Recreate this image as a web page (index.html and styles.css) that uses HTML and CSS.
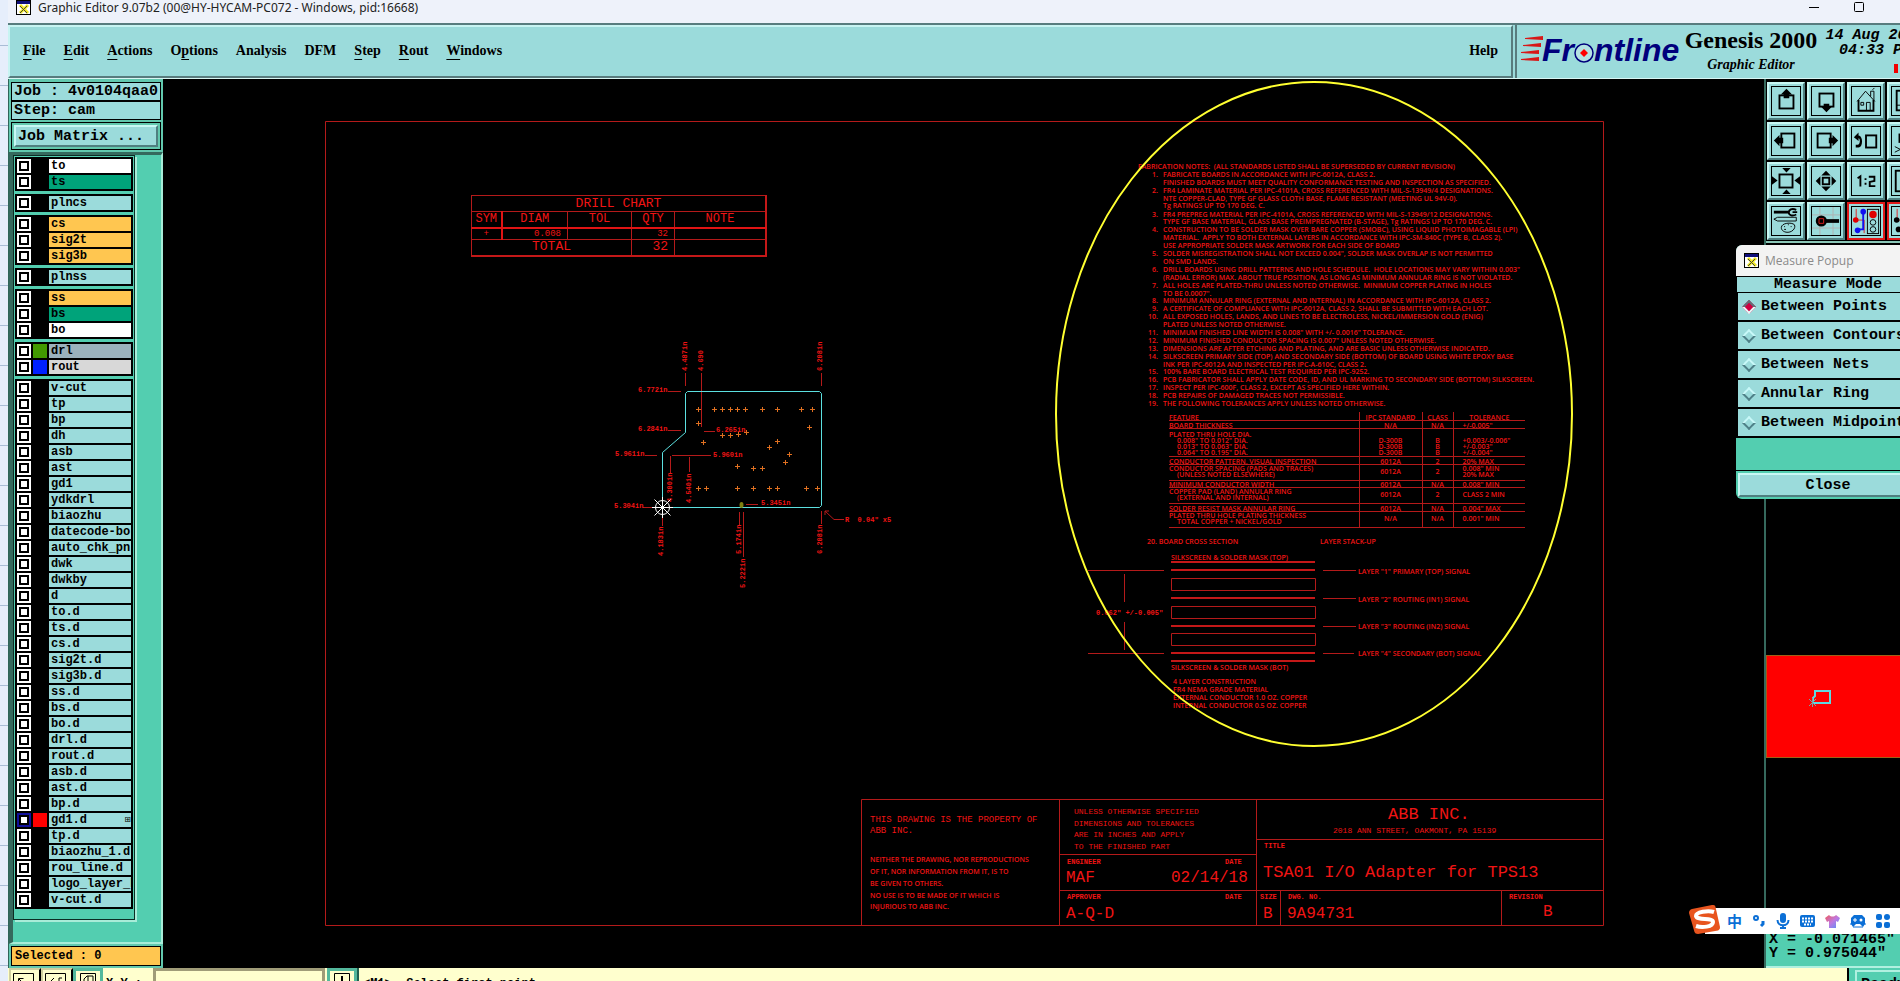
FILE: index.html
```html
<!DOCTYPE html>
<html lang="en">
<head>
    <meta charset="UTF-8">
    <meta name="viewport" content="width=device-width, initial-scale=1.0">
    <title>Graphic Editor</title>
    <link rel="stylesheet" href="styles.css">
</head>
<body>
    <div class="app">
        <header class="titlebar">
            <svg class="app-icon" width="15" height="15" viewBox="0 0 15 15"><rect x="0.5" y="0.5" width="14" height="14" fill="#fff" stroke="#000"/><rect x="1" y="1" width="13" height="3" fill="#10107a"/><path d="M4 5l8 8M12 5l-8 8" stroke="#f0e820" stroke-width="3"/><path d="M4 6l7 7M11 6l-7 7" stroke="#444"/></svg>
            <span class="title">Graphic Editor 9.07b2 (00@HY-HYCAM-PC072 - Windows, pid:16668)</span>
            <div class="window-buttons">
                <button type="button" aria-label="Minimize"><svg width="10" height="10"><path d="M0 5.5h10" stroke="#000"/></svg></button>
                <button type="button" aria-label="Maximize"><svg width="10" height="10"><rect x="0.5" y="0.5" width="9" height="9" rx="1" fill="none" stroke="#000"/></svg></button>
                <button type="button" aria-label="Close"></button>
            </div>
        </header>

        <div class="topbar">
            <nav class="menu">
                <button type="button"><u>F</u>ile</button>
                <button type="button"><u>E</u>dit</button>
                <button type="button"><u>A</u>ctions</button>
                <button type="button">O<u>p</u>tions</button>
                <button type="button">Analysis</button>
                <button type="button">DFM</button>
                <button type="button"><u>S</u>tep</button>
                <button type="button"><u>R</u>out</button>
                <button type="button"><u>W</u>indows</button>
                <button type="button" class="help">Help</button>
            </nav>
            <div class="brand">
                <svg class="logo" width="162" height="34" viewBox="0 0 162 34">
                    <g fill="#d81818"><path d="M4 5L22 3V7L4 6zM2 12L20 10V14L2 13zM0 19L18 17V21L0 20zM0 26L18 24V28L0 27z"/></g>
                    <text class="logo-text" x="21" y="28">Fr</text>
                    <text class="logo-text" x="73" y="28">ntline</text>
                    <circle cx="63" cy="20" r="9" fill="#b4e2e2" stroke="#00007c" stroke-width="1.5"/>
                    <path d="M63 16l4 4-4 4-4-4z" fill="#f00"/>
                </svg>
                <div class="product">
                    <div class="product-name">Genesis 2000</div>
                    <div class="product-sub">Graphic Editor</div>
                </div>
                <div class="clock">
                    <div>14 Aug 2018</div>
                    <div>04:33 PM</div>
                    <span class="clock-mark"></span>
                </div>
            </div>
        </div>

        <div class="main">
            <aside class="left">
                <div class="job-box">
                    <div>Job : 4v0104qaa0</div>
                    <div>Step: cam</div>
                </div>
                <div class="matrix-box"><button type="button">Job Matrix ...</button></div>
                <div class="layers-well">
                    <div class="layers" id="layers"></div>
                </div>
                <div class="selected-box"><div>Selected : 0</div></div>
            </aside>

            <section class="canvas">
                <svg class="drawing" width="1602" height="889" viewBox="163 79 1602 889">
                    <!-- sheet border and title block -->
                    <path class="line" d="M325.5 121.5H1603.5V925.5H325.5zM861.5 925V799.5H1603M1059.5 799V925M1256.5 799V925M1059 854.5H1256M1256 839.5H1603M1059 890.5H1603M1280.5 890V925M1501.5 890V925"/>
                    <g class="t9">
                        <text x="870" y="822">THIS DRAWING IS THE PROPERTY OF</text>
                        <text x="870" y="833">ABB INC.</text>
                    </g>
                    <g class="t8">
                        <text x="1074" y="814">UNLESS OTHERWISE SPECIFIED</text>
                        <text x="1074" y="826">DIMENSIONS AND TOLERANCES</text>
                        <text x="1074" y="837">ARE IN INCHES AND APPLY</text>
                        <text x="1074" y="849">TO THE FINISHED PART</text>
                        <text x="1333" y="833">2018 ANN STREET, OAKMONT, PA 15139</text>
                    </g>
                    <g class="t7">
                        <text class="note" x="870" y="862">NEITHER THE DRAWING, NOR REPRODUCTIONS</text>
                        <text class="note" x="870" y="874">OF IT, NOR INFORMATION FROM IT, IS TO</text>
                        <text class="note" x="870" y="886">BE GIVEN TO OTHERS.</text>
                        <text class="note" x="870" y="898">NO USE IS TO BE MADE OF IT WHICH IS</text>
                        <text class="note" x="870" y="909">INJURIOUS TO ABB INC.</text>
                        <text x="1067" y="864">ENGINEER</text>
                        <text x="1225" y="864">DATE</text>
                        <text x="1067" y="899">APPROVER</text>
                        <text x="1225" y="899">DATE</text>
                        <text x="1264" y="848">TITLE</text>
                        <text x="1260" y="899">SIZE</text>
                        <text x="1288" y="899">DWG. NO.</text>
                        <text x="1509" y="899">REVISION</text>
                    </g>
                    <g class="t16">
                        <text x="1066" y="882">MAF</text>
                        <text x="1171" y="882">02/14/18</text>
                        <text x="1066" y="918">A-Q-D</text>
                        <text x="1263" y="918">B</text>
                        <text x="1287" y="918">9A94731</text>
                        <text x="1543" y="916">B</text>
                    </g>
                    <g class="t17">
                        <text x="1388" y="819">ABB INC.</text>
                        <text x="1263" y="877">TSA01 I/O Adapter for TPS13</text>
                    </g>

                    <!-- board outline with dimensions -->
                    <path class="line" d="M685.5 373V386M701.5 373V427M821.5 373V386M668 391.5H681M668 430.5H681M645 455.5H657M643 507.5H652M704 431.5H715M672 455.5H711M670.5 456V473M689.5 457V472M662.5 517V526M739.5 512V525M743.5 512V557M746 504.5H758M821.5 511V524M825 511L834 519.5H844M825 515V511H829"/>
                    <g class="t7">
                        <text x="638" y="392">6.772in</text>
                        <text x="638" y="431">6.284in</text>
                        <text x="615" y="456">5.961in</text>
                        <text x="614" y="508">5.304in</text>
                        <text x="716" y="432">6.265in</text>
                        <text x="713" y="457">5.960in</text>
                        <text x="761" y="505">5.345in</text>
                        <text x="845" y="522">R  0.04" x5</text>
                        <text transform="translate(687 371) rotate(-90)">4.487in</text>
                        <text transform="translate(703 371) rotate(-90)">4.690</text>
                        <text transform="translate(822 371) rotate(-90)">6.208in</text>
                        <text transform="translate(672 502) rotate(-90)">4.300in</text>
                        <text transform="translate(691 503) rotate(-90)">4.540in</text>
                        <text transform="translate(663 556) rotate(-90)">4.183in</text>
                        <text transform="translate(741 554) rotate(-90)">5.174in</text>
                        <text transform="translate(745 588) rotate(-90)">5.222in</text>
                        <text transform="translate(822 554) rotate(-90)">6.208in</text>
                    </g>
                    <path class="outline" d="M687.5 391.5H819.5L821.5 393.5V505.5L819.5 507.5H662.5V452.5L685.5 432.5V393.5z"/>
                    <g id="drills"></g>
                    <ellipse cx="741.5" cy="505" rx="2" ry="3" fill="#808010"/>
                    <g class="origin"><circle cx="662.5" cy="507.5" r="7"/><path d="M652 507.5H673M662.5 497V518M654.5 499.5l16 16M670.5 499.5l-16 16"/></g>

                    <!-- fabrication notes -->
                    <g class="t7 note" id="notes"></g>

                    <!-- layer stack-up -->
                    <g class="t7 note">
                        <text x="1147" y="544">20. BOARD CROSS SECTION</text>
                        <text x="1320" y="544">LAYER STACK-UP</text>
                        <text x="1171" y="560">SILKSCREEN &amp; SOLDER MASK (TOP)</text>
                        <text x="1171" y="670">SILKSCREEN &amp; SOLDER MASK (BOT)</text>
                        <text x="1173" y="684">4 LAYER CONSTRUCTION</text>
                        <text x="1173" y="692">FR4 NEMA GRADE MATERIAL</text>
                        <text x="1173" y="700">EXTERNAL CONDUCTOR 1.0 OZ. COPPER</text>
                        <text x="1173" y="708">INTERNAL CONDUCTOR 0.5 OZ. COPPER</text>
                        <text x="1358" y="574">LAYER "1" PRIMARY (TOP) SIGNAL</text>
                        <text x="1358" y="602">LAYER "2" ROUTING (IN1) SIGNAL</text>
                        <text x="1358" y="629">LAYER "3" ROUTING (IN2) SIGNAL</text>
                        <text x="1358" y="656">LAYER "4" SECONDARY (BOT) SIGNAL</text>
                    </g>
                    <g class="t7">
                        <text x="1096" y="615">0.062" +/-0.005"</text>
                    </g>
                    <path class="line" d="M1171.5 578.5H1315.5V590.5H1171.5zM1171.5 606.5H1315.5V618.5H1171.5zM1171.5 633.5H1315.5V645.5H1171.5zM1088 570.5H1164M1088 653.5H1164M1124.5 574V602M1124.5 622V650M1323 570.5H1356M1323 598.5H1356M1323 626.5H1356M1323 653.5H1354"/>
                    <path class="line thick" d="M1171 562H1315M1171 570H1315M1171 598H1315M1171 626H1315M1171 653H1315M1171 661H1315"/>
                    <ellipse class="marker" cx="1314" cy="414" rx="258" ry="332"/>
                </svg>

                <table class="drill-chart">
                    <colgroup><col class="sym"><col class="diam"><col class="tol"><col class="qty"><col></colgroup>
                    <tr><th colspan="5">DRILL CHART</th></tr>
                    <tr class="heads"><th>SYM</th><th>DIAM</th><th>TOL</th><th>QTY</th><th>NOTE</th></tr>
                    <tr class="values"><td>+</td><td class="num">0.008</td><td></td><td class="num">32</td><td></td></tr>
                    <tr><td colspan="3">TOTAL</td><td class="num">32</td><td></td></tr>
                </table>

                <table class="tolerances">
                    <tr class="h8"><th class="feature">FEATURE</th><th class="std">IPC STANDARD</th><th class="class">CLASS</th><th>TOLERANCE</th></tr>
                    <tr class="h8"><td>BOARD THICKNESS</td><td>N/A</td><td>N/A</td><td>+/-0.005"</td></tr>
                    <tr class="h28"><td>PLATED THRU HOLE DIA.<br><span>0.008" TO 0.012" DIA.<br>0.013" TO 0.063" DIA.<br>0.064" TO 0.195" DIA.</span></td><td>D-300B<br>D-300B<br>D-300B</td><td>B<br>B<br>B</td><td>+0.003/-0.006"<br>+/-0.003"<br>+/-0.004"</td></tr>
                    <tr class="h8"><td>CONDUCTOR PATTERN, VISUAL INSPECTION</td><td>6012A</td><td>2</td><td>20% MAX</td></tr>
                    <tr class="h16"><td>CONDUCTOR SPACING (PADS AND TRACES)<br><span>(UNLESS NOTED ELSEWHERE)</span></td><td>6012A</td><td>2</td><td>0.008" MIN<br>20% MAX</td></tr>
                    <tr class="h7"><td>MINIMUM CONDUCTOR WIDTH</td><td>6012A</td><td>N/A</td><td>0.008" MIN</td></tr>
                    <tr class="h16"><td>COPPER PAD (LAND) ANNULAR RING<br><span>(EXTERNAL AND INTERNAL)</span></td><td>6012A</td><td>2</td><td>CLASS 2 MIN</td></tr>
                    <tr class="h8"><td>SOLDER RESIST MASK ANNULAR RING</td><td>6012A</td><td>N/A</td><td>0.004" MAX</td></tr>
                    <tr class="h16"><td>PLATED THRU HOLE PLATING THICKNESS<br><span>TOTAL COPPER + NICKEL/GOLD</span></td><td>N/A</td><td>N/A</td><td>0.001" MIN</td></tr>
                </table>
            </section>

            <aside class="right">
                <div class="tools">
                    <button type="button" aria-label="Pan up"><svg viewBox="0 0 30 30"><rect x="8" y="9" width="15" height="14" class="s2"/><path d="M15.5 2l6 6h-3v4h-6V8h-3z"/></svg></button>
                    <button type="button" aria-label="Pan down"><svg viewBox="0 0 30 30"><rect x="8" y="7" width="15" height="14" class="s2"/><path d="M15.5 27l6-6h-3v-3h-6v3h-3z"/></svg></button>
                    <button type="button" aria-label="Home"><svg viewBox="0 0 30 30"><path class="s1" d="M5.5 15.5L14.5 4.5L24.5 15.5M20 10V4.5h3.5V14M22 3l2-2"/><path class="s2" d="M7 14V25.5H23V14"/><path class="s1" d="M9.5 16.5h3v3h-3zM15.5 25V16.5h4V25"/></svg></button>
                    <button type="button" aria-label="Window"><svg viewBox="0 0 30 30"><rect x="5" y="4" width="20" height="21" class="s2"/><path class="s1" d="M5 19.5h20"/></svg></button>
                    <button type="button" aria-label="Pan left"><svg viewBox="0 0 30 30"><rect x="10" y="7" width="14" height="15" class="s2"/><path d="M2 14.5l6-6v3h4v6H8v3z"/></svg></button>
                    <button type="button" aria-label="Pan right"><svg viewBox="0 0 30 30"><rect x="6" y="7" width="14" height="15" class="s2"/><path d="M28 14.5l-6-6v3h-4v6h4v3z"/></svg></button>
                    <button type="button" aria-label="Previous view"><svg viewBox="0 0 30 30"><rect x="15" y="9" width="11" height="13" class="s2"/><path d="M2 11l5-5v3c5 0 5 13 0 13H4v-3h2c3 0 3-7 1-7v3z"/></svg></button>
                    <button type="button" aria-label="Zoom area"><svg viewBox="0 0 30 30"><rect x="8" y="8" width="12" height="8" class="s2"/><path class="s1" d="M3 21l6 3-6 3M14 22h10"/></svg></button>
                    <button type="button" aria-label="Zoom out"><svg viewBox="0 0 30 30"><rect x="8" y="8" width="14" height="14" class="s2"/><path d="M11 1h9l-4.5 5zM11 29h9l-4.5-5zM0 10v9l6-4.5zM30 10v9l-6-4.5z"/></svg></button>
                    <button type="button" aria-label="Zoom in"><svg viewBox="0 0 30 30"><rect x="11.5" y="11.5" width="7" height="7" class="s2"/><path d="M15 4l5 5h-10zM15 26l5-5h-10zM4 15l5-5v10zM26 15l-5-5v10z"/></svg></button>
                    <button type="button" aria-label="Half scale"><svg viewBox="0 0 30 30"><path class="s2" d="M6 12l3-2V21M14.5 12v2M14.5 17v2M18 10.5h6V15l-5 1v4.5h6"/></svg></button>
                    <button type="button" aria-label="Fit"><svg viewBox="0 0 30 30"><rect x="4" y="4" width="22" height="22" class="s2"/></svg></button>
                    <button type="button" aria-label="Edit tools"><svg viewBox="0 0 30 30"><path d="M2 4h16v3H2z"/><path class="s2" d="M26 3c-5-2-8 0-8 3s4 4 8 2M22 5.5h5"/><path class="s1" d="M2 13l4-2h20v4H6z"/><path class="s1" d="M10 22c0-5 11-6 14-3 2 4-3 9-9 8-4-1-5-3-5-5z"/><path class="s1" d="M13 21h1M17 19h1M20 21h1M13 24h2"/></svg></button>
                    <button type="button" aria-label="Snap"><svg viewBox="0 0 30 30"><path d="M0 8.5h30M0 22.5h30M8.5 0v30M22.5 0v30" stroke="#b0b0b0"/><circle cx="10" cy="15" r="6"/><path d="M15 13h14v4H15z"/><path d="M7.5 12.5h5v5h-5z" fill="none" stroke="#e02020"/></svg></button>
                    <button type="button" class="alert" aria-label="Net colors"><svg viewBox="0 0 30 30"><path d="M4.5 2v12M4 14h9v14" fill="none" stroke="#e02020"/><path d="M12 6v18H6" fill="none" stroke="#1010f0" stroke-width="2"/><circle cx="4" cy="14" r="3" fill="#e00000"/><circle cx="12" cy="5" r="3" fill="#1010f0"/><circle cx="6" cy="25" r="3" fill="#1010f0"/><rect class="s1" x="16.5" y="2.5" width="12" height="26"/><circle cx="22.5" cy="8" r="4" fill="#e00000"/><circle class="s1" cx="22.5" cy="16.5" r="3"/><circle class="s1" cx="22.5" cy="24" r="3"/></svg></button>
                    <button type="button" class="alert" aria-label="Nets"><svg viewBox="0 0 30 30"><path d="M5.5 2v12M5 14h9v14" fill="none" stroke="#e02020"/><circle cx="5" cy="14" r="3"/><circle cx="7" cy="24" r="3"/></svg></button>
                </div>
                <div class="overview">
                    <svg width="24" height="20" viewBox="0 0 24 20"><path d="M7 2h15v12H5V9l2-2z" fill="none" stroke="#60d8e0" stroke-width="2"/><path d="M1 10l7 7M8 10l-7 7M4.5 9v9" stroke="#80a0a0" fill="none"/></svg>
                </div>
                <div class="coords">
                    <div>X = -0.071465"</div>
                    <div>Y = 0.975044"</div>
                </div>
            </aside>
        </div>

        <footer class="bottom">
            <button type="button" class="tool" aria-label="Profile"><svg width="22" height="20"><path class="s1" d="M.5 20V.5h20V20M5.5 20V5.5h5M6 6l6 6"/></svg></button>
            <button type="button" class="tool" aria-label="Contour"><svg width="22" height="20"><path class="s1" d="M.5 20V.5h20V20M5 9l4-4M14 9V5h3"/></svg></button>
            <button type="button" class="tool teal" aria-label="Attributes"><svg width="16" height="20"><path class="s1" d="M.5 20V.5h15V20M4 9V6l3-3h6v8M8 3v8"/></svg></button>
            <label for="xy">X Y :</label>
            <input type="text" id="xy">
            <button type="button" class="tool teal" aria-label="Add"><svg width="16" height="20"><path class="s1" d="M.5 20V.5h15V20"/><path class="s2" d="M8 3v10"/></svg></button>
            <div class="status">&lt;M1&gt;- Select first point</div>
            <div class="ready"><div>Ready</div></div>
        </footer>
    </div>

    <div class="popup">
        <div class="popup-title">
            <svg class="app-icon" width="15" height="15" viewBox="0 0 15 15"><rect x="0.5" y="0.5" width="14" height="14" fill="#fff" stroke="#000"/><rect x="1" y="1" width="13" height="3" fill="#10107a"/><path d="M4 5l8 8M12 5l-8 8" stroke="#f0e820" stroke-width="3"/><path d="M4 6l7 7M11 6l-7 7" stroke="#444"/></svg>
            <span>Measure Popup</span>
        </div>
        <div class="popup-head">Measure Mode</div>
        <div class="modes">
            <label><input type="radio" name="mode" checked>Between Points</label>
            <label><input type="radio" name="mode">Between Contours</label>
            <label><input type="radio" name="mode">Between Nets</label>
            <label><input type="radio" name="mode">Annular Ring</label>
            <label><input type="radio" name="mode">Between Midpoints</label>
        </div>
        <div class="popup-foot"><button type="button">Close</button></div>
    </div>

    <div class="ime">
        <svg class="ime-logo" width="32" height="31" viewBox="0 0 32 31"><path d="M3 5L23 1c2 0 3 0 3.500 2L31 23c0 2-1 3-2 3.500L9 30c-2 0-3-1-3.500-2L0 9C0 7 1 5.500 3 5z" fill="#e8541e"/><path d="M25 8C19 6 7 8 7 12c1 5 17 1 17 6 0 5-11 6-17 4" fill="none" stroke="#fff" stroke-width="4"/></svg>
        <span>中</span>
        <svg width="14" height="14" viewBox="0 0 14 14"><circle cx="4" cy="4" r="2" fill="none" stroke="#0b6fd6" stroke-width="2"/><path d="M11 7v3l-2 2" fill="none" stroke="#0b6fd6" stroke-width="3"/></svg>
        <svg width="14" height="16" viewBox="0 0 14 16"><rect x="4" y="0" width="6" height="10" rx="3" fill="#0b6fd6"/><path d="M1.500 7c0 7 11 7 11 0M7 12v3M4 15h6" fill="none" stroke="#0b6fd6" stroke-width="2"/></svg>
        <svg width="15" height="13" viewBox="0 0 15 13"><rect width="15" height="12" rx="2" fill="#0b6fd6"/><path d="M2 3.500h11M2 6.500h11M4 9.500h7" stroke="#fff" stroke-width="2" stroke-dasharray="2 1"/></svg>
        <svg width="15" height="14" viewBox="0 0 15 14"><defs><linearGradient id="shirt" x1="0" y1="0" x2="1" y2="1"><stop offset="0" stop-color="#ee5a5a"/><stop offset="0.500" stop-color="#c078e0"/><stop offset="1" stop-color="#5090f8"/></linearGradient></defs><path d="M4 1c2 2 5 2 7 0l4 3-2 4-2-1v7H4V7L2 8 0 4z" fill="url(#shirt)"/></svg>
        <svg width="16" height="14" viewBox="0 0 16 14"><path d="M4 1h8l3 3v6l-2 3-3-3H6l-3 3-2-3V4z" fill="#0b6fd6"/><path d="M3 6h4M5 4v4" stroke="#fff"/><circle cx="11" cy="6" r="1.500" fill="#fff"/><path d="M0 10h3M13 10h3M3 13h10" stroke="#0b6fd6"/></svg>
        <svg width="14" height="14" viewBox="0 0 14 14"><g fill="#0b6fd6"><rect width="6" height="6" rx="2"/><circle cx="11" cy="3" r="3"/><rect y="8" width="6" height="6" rx="2"/><rect x="8" y="8" width="6" height="6" rx="2"/></g></svg>
        <svg width="14" height="14" viewBox="0 0 14 14"><circle cx="7" cy="7" r="5" fill="none" stroke="#0b6fd6" stroke-width="3" stroke-dasharray="3 1"/></svg>
    </div>

    <script src="script.js"></script>
</body>
</html>
```

FILE: styles.css
```css
* {
    box-sizing: border-box;
}

body {
    margin: 0;
    height: 100vh;
    overflow: hidden;
    position: relative;
    padding-left: 8px;
    background: repeating-linear-gradient(#e6eefb 0 39px, #a9bdd6 39px 40px) 0 6px;
    font-family: "Liberation Mono", monospace;
    color: #000;
}

button {
    font: inherit;
    color: inherit;
    border: none;
    margin: 0;
    padding: 0;
    background: none;
}

svg {
    display: block;
    flex-shrink: 0;
}

.s1,
.s2 {
    fill: none;
    stroke: #000;
}

.s2 {
    stroke-width: 2;
}

.app {
    width: calc(100% + 28px);
    height: 100%;
    display: flex;
    flex-direction: column;
    background: #000;
}

/* title bar */
.titlebar {
    height: 23px;
    display: flex;
    background: #eef2fa;
    padding-left: 8px;
    font: 12px/16px "Noto Sans", sans-serif;
    color: #222;
}

.title {
    margin-left: 7px;
}

.window-buttons {
    margin-left: auto;
    margin-right: 2px;
    display: flex;
}

.window-buttons button {
    width: 45px;
    height: 14px;
    display: flex;
    align-items: center;
    justify-content: center;
}

/* menu and logo */
.topbar {
    height: 56px;
    display: flex;
    background: #9bdbdb;
    border-top: 2px solid #587c7e;
    border-bottom: 1px solid #d8f6f4;
}

.menu {
    flex: 1;
    display: flex;
    align-items: center;
    gap: 18px;
    padding: 0 13px 2px;
    margin-right: 2px;
    border: 2px solid;
    border-color: #c8f4f2 #587c7e #587c7e #c8f4f2;
    font: bold 14px/20px "Liberation Serif", serif;
}

.menu u {
    text-underline-offset: 4px;
}

.help {
    margin-left: auto;
}

.brand {
    width: 413px;
    display: flex;
    border-left: 2px solid #587c7e;
    padding-left: 4px;
}

.logo {
    margin-top: 8px;
}

.logo-text {
    font: italic bold 32px "Liberation Sans", sans-serif;
    fill: #00007c;
}

.product {
    width: 136px;
    text-align: center;
    font-family: "Liberation Serif", serif;
    font-weight: bold;
}

.product-name {
    font-size: 24px;
    line-height: 30px;
}

.product-sub {
    font-size: 14px;
    font-style: italic;
    line-height: 20px;
}

.clock {
    width: 106px;
    margin-left: 3px;
    text-align: center;
    font: italic bold 15px/15px "Liberation Mono", monospace;
    padding-top: 3px;
}

.clock-mark {
    display: block;
    width: 4px;
    height: 9px;
    margin: 6px auto 0 72px;
    background: #f00000;
}

.main {
    flex: 1;
    min-height: 0;
    display: flex;
}

/* layer list */
.left {
    width: 155px;
    display: flex;
    flex-direction: column;
    background: #62c8ae;
    padding: 3px 2px 2px 2px;
    border-left: 1px solid #2f6558;
}

.job-box div {
    height: 19px;
    border: 1px solid #000;
    background: #9bdbdb;
    padding-left: 2px;
    font-size: 15px;
    line-height: 18px;
    font-weight: bold;
    white-space: nowrap;
}

.matrix-box {
    margin-top: 2px;
    padding: 2px;
    border: 1px solid #000;
}

.matrix-box button,
.popup-foot button {
    display: block;
    width: 100%;
    height: 22px;
    background: #9bdbdb;
    border: 2px solid;
    border-color: #c8f8f4 #4f7f80 #4f7f80 #c8f8f4;
    font-size: 15px;
    font-weight: bold;
}

.matrix-box button {
    text-align: left;
    padding-left: 2px;
}

.layers-well {
    flex: 1;
    margin: 2px -2px 2px -2px;
    border: solid;
    border-width: 3px 2px 2px 4px;
    border-color: #35695d #a8ecd8 #a8ecd8 #35695d;
    background: #53ceb0;
}

.layers {
    width: 122px;
    height: 765px;
    padding: 1px 0 0 1px;
    display: flex;
    flex-direction: column;
    gap: 3px;
    border: 1px solid #0c2c24;
    box-shadow: 2px 2px 0 #a8ecd8;
}

.group {
    width: 118px;
    padding: 2px;
    background: #000;
    display: flex;
    flex-direction: column;
    gap: 2px;
}

.layer {
    height: 14px;
    display: grid;
    grid-template-columns: 14px 14px 1fr;
    gap: 2px;
    font-size: 12px;
    font-weight: bold;
    line-height: 15px;
    white-space: nowrap;
}

.layer input {
    appearance: none;
    margin: 0;
    width: 14px;
    height: 14px;
    border: 2px solid #fff;
    background: #fff;
    box-shadow: inset 0 0 0 2px #000;
}

.layer input:checked {
    border-color: #10109c;
}

.name {
    background: #9bdbdb;
    overflow: hidden;
    padding-left: 2px;
    display: flex;
    justify-content: space-between;
}

.flag {
    font: 8px/14px "DejaVu Sans", sans-serif;
}

.black { background: #000; }
.white { background: #fff; }
.green { background: #00a37a; }
.orange { background: #ffc650; }
.slate { background: #9bb2bd; }
.grey { background: #d8d8d8; }
.olive { background: #429a00; }
.blue { background: #0020ff; }
.red { background: #f00; }

.selected-box div {
    height: 20px;
    border: 1px solid #000;
    background: #ffc650;
    padding-left: 3px;
    font-size: 12px;
    font-weight: bold;
    line-height: 18px;
}

/* drawing */
.canvas {
    flex: 1;
    min-width: 0;
    position: relative;
    overflow: hidden;
}

.drawing text {
    fill: #f01414;
    white-space: pre;
}

.line {
    fill: none;
    stroke: #b41a1a;
}

.thick {
    stroke: #c41818;
    stroke-width: 2;
}

.outline {
    fill: none;
    stroke: #5ce0e0;
}

.origin {
    fill: none;
    stroke: #fff;
}

.marker {
    fill: none;
    stroke: #ffff30;
    stroke-width: 2;
}

.t7 { font-size: 7px; font-weight: bold; }
.t8 { font-size: 8px; }
.t9 { font-size: 9px; }
.t16 { font-size: 16px; }
.t17 { font-size: 17px; }

.note {
    font-family: "Open Sans", sans-serif;
    font-weight: 600;
}

.drill-chart,
.tolerances {
    position: absolute;
    border-collapse: collapse;
    table-layout: fixed;
    color: #f01414;
}

.drill-chart th,
.drill-chart td,
.tolerances th,
.tolerances td {
    padding: 0;
    font-weight: normal;
}

.drill-chart {
    left: 308px;
    top: 116px;
    width: 296px;
    border: 1px solid #c41818;
    border-right-width: 2px;
    border-bottom-width: 2px;
    font-size: 13px;
    line-height: 14px;
    text-align: center;
}

.drill-chart th,
.drill-chart td {
    height: 16px;
    border: 1px solid #b41a1a;
}

.drill-chart .heads th {
    font-size: 12px;
    border-bottom: 2px solid #e01414;
}

.drill-chart .values td {
    height: 12px;
    font-size: 9px;
    line-height: 10px;
}

.drill-chart .heads th:first-child,
.drill-chart .values td:first-child {
    border-right: 2px solid #e01414;
}

.drill-chart .sym { width: 30px; }
.drill-chart .diam { width: 66px; }
.drill-chart .tol { width: 64px; }
.drill-chart .qty { width: 43px; }

.drill-chart .num {
    text-align: right;
    padding-right: 6px;
}

.tolerances {
    left: 1006px;
    top: 333px;
    width: 356px;
    font-size: 7px;
    line-height: 6px;
    text-align: center;
}

.tolerances tr {
    border-bottom: 1px solid #b41a1a;
}

.tolerances th,
.tolerances td {
    border-left: 1px solid #b41a1a;
    white-space: nowrap;
    font-family: "Open Sans", sans-serif;
    font-weight: 600;
}

.tolerances th:first-child,
.tolerances td:first-child {
    border-left: none;
    text-align: left;
}

.tolerances td:last-child {
    text-align: left;
    padding-left: 9px;
}

.tolerances span {
    display: inline-block;
    padding-left: 8px;
}

.feature { width: 190px; }
.std { width: 63px; }
.class { width: 31px; }

.h7 { height: 7px; }
.h8 { height: 8px; }
.h16 { height: 16px; }
.h28 { height: 28px; }

.h8 th,
.h8 td,
.h7 td,
.h28 td {
    vertical-align: bottom;
}

.h8 th,
.h8 td,
.h7 td {
    line-height: 5px;
}

/* tool column */
.right {
    width: 164px;
    display: flex;
    flex-direction: column;
    border-left: 2px solid #35695d;
}

.tools {
    display: grid;
    grid-template-columns: repeat(4, 38px);
    gap: 2px;
    padding: 3px 1px 1px;
    border-bottom: 2px solid #8cc8b8;
}

.tools button {
    height: 38px;
    padding: 2px;
    background: #9bdbdb;
    border: 2px solid;
    border-color: #c8f8f4 #4f7f80 #4f7f80 #c8f8f4;
}

.tools svg {
    width: 30px;
    height: 30px;
    border: 1px solid #000;
}

.tools .alert {
    border-color: #e01818;
}

.overview {
    margin-top: auto;
    height: 103px;
    background: #f00;
    border: 1px solid #a06018;
    padding: 33px 0 0 41px;
}

.coords {
    margin-top: 168px;
    height: 42px;
    padding: 7px 3px 0;
    background: #53ceb0;
    border-bottom: 2px solid #b0f0e0;
    font-size: 15px;
    line-height: 14px;
    font-weight: bold;
}

/* command line */
.bottom {
    height: 13px;
    overflow: hidden;
    display: flex;
    align-items: flex-start;
    background: #ffffce;
    font-size: 12px;
    line-height: 32px;
    font-weight: bold;
    padding-left: 1px;
    white-space: nowrap;
}

.tool {
    width: 32px;
    height: 30px;
    padding: 2px;
    background: #ffffce;
    border: 2px solid #d0d0a0;
    border-right: 2px solid #000;
}

.tool.teal {
    width: 30px;
    padding: 2px 4px;
    border: 3px solid #53b89c;
}

.bottom label {
    width: 50px;
    padding-left: 3px;
}

.bottom input {
    width: 172px;
    height: 30px;
    padding: 0 4px;
    border: 3px solid #a09c78;
    background: #ffffce;
    margin-right: 2px;
}

.status {
    flex: 1;
    padding-left: 4px;
    border-left: 2px solid #206050;
}

.ready {
    width: 81px;
    padding: 2px 0 0 6px;
    background: #53ceb0;
    border-left: 2px solid #000;
}

.ready div {
    border: 2px solid #b0f0e0;
    padding-left: 4px;
    font-size: 15px;
    line-height: 26px;
}

/* measure popup */
.popup {
    position: absolute;
    left: 1736px;
    top: 245px;
    width: 184px;
    border-radius: 6px;
    overflow: hidden;
    background: #53ceb0;
    font-size: 15px;
    font-weight: bold;
}

.popup-title {
    height: 31px;
    display: flex;
    align-items: center;
    gap: 6px;
    padding-left: 8px;
    background: #f3f3f3;
    font: 12px/16px "Open Sans", sans-serif;
    color: #8a8a8a;
}

.popup-head {
    border: 1px solid #000;
    background: #9bdbdb;
    height: 17px;
    line-height: 16px;
    text-align: center;
}

.modes {
    border-left: 2px solid #000;
}

.modes label {
    display: flex;
    align-items: center;
    gap: 7px;
    height: 29px;
    padding-left: 6px;
    background: #9bdbdb;
    border-bottom: 2px solid #000;
    white-space: nowrap;
}

.modes input {
    appearance: none;
    width: 10px;
    height: 10px;
    margin: 0;
    border: 2px solid;
    border-color: #c8f8f8 #4f8088 #4f8088 #c8f8f8;
    transform: rotate(45deg);
}

.modes input:checked {
    background: #d00040;
    border-color: #607078 #e8f8f8 #e8f8f8 #607078;
}

.popup-foot {
    margin-top: 32px;
    padding: 2px;
    border-top: 1px solid #000;
}

.popup-foot button {
    height: 24px;
}

/* input method bar */
.ime {
    position: absolute;
    left: 1689px;
    top: 908px;
    width: 231px;
    height: 26px;
    padding-left: 38px;
    display: flex;
    align-items: center;
    gap: 10px;
    background: linear-gradient(90deg, transparent 16px, #fff 16px);
    font: bold 15px/20px "Noto Sans CJK SC", sans-serif;
    color: #0b6fd6;
}

.ime-logo {
    position: absolute;
    left: 0;
    top: -4px;
}
```

FILE: script.js
```js
// layer groups: [name, row color, swatch color]
const groups = [
    [['to', 'white'], ['ts', 'green']],
    [['plncs']],
    [['cs', 'orange'], ['sig2t', 'orange'], ['sig3b', 'orange']],
    [['plnss']],
    [['ss', 'orange'], ['bs', 'green'], ['bo', 'white']],
    [['drl', 'slate', 'olive'], ['rout', 'grey', 'blue']],
    ['v-cut', 'tp', 'bp', 'dh', 'asb', 'ast', 'gd1', 'ydkdrl', 'biaozhu', 'datecode-bo',
        'auto_chk_pnl', 'dwk', 'dwkby', 'd', 'to.d', 'ts.d', 'cs.d', 'sig2t.d', 'sig3b.d',
        'ss.d', 'bs.d', 'bo.d', 'drl.d', 'rout.d', 'asb.d', 'ast.d', 'bp.d', 'gd1.d', 'tp.d',
        'biaozhu_1.d', 'rou_line.d', 'logo_layer_b', 'v-cut.d'].map(n => n === 'gd1.d' ? [n, '', 'red'] : [n])
];

document.getElementById('layers').innerHTML = groups.map(group =>
    '<div class="group">' + group.map(([name, row = '', swatch = 'black']) => {
        const active = name === 'gd1.d';
        return `<label class="layer"><input type="checkbox"${active ? ' checked' : ''}>` +
            `<span class="${swatch}"></span>` +
            `<span class="name ${row}">${name}${active ? '<span class="flag">⊞</span>' : ''}</span></label>`;
    }).join('') + '</div>'
).join('');

// notes: [baseline, number, text]
const notes = [
    [177, '1.', 'FABRICATE BOARDS IN ACCORDANCE WITH IPC-6012A, CLASS 2.'],
    [185, '', 'FINISHED BOARDS MUST MEET QUALITY CONFORMANCE TESTING AND INSPECTION AS SPECIFIED.'],
    [193, '2.', 'FR4 LAMINATE MATERIAL PER IPC-4101A, CROSS REFERENCED WITH MIL-S-13949/4 DESIGNATIONS.'],
    [201, '', 'NTE COPPER-CLAD, TYPE GF GLASS CLOTH BASE, FLAME RESISTANT (MEETING UL 94V-0).'],
    [208, '', 'Tg RATINGS UP TO 170 DEG. C.'],
    [217, '3.', 'FR4 PREPREG MATERIAL PER IPC-4101A, CROSS REFERENCED WITH MIL-S-13949/12 DESIGNATIONS.'],
    [224, '', 'TYPE GF BASE MATERIAL, GLASS BASE PREIMPREGNATED (B-STAGE), Tg RATINGS UP TO 170 DEG. C.'],
    [232, '4.', 'CONSTRUCTION TO BE SOLDER MASK OVER BARE COPPER (SMOBC), USING LIQUID PHOTOIMAGABLE (LPI)'],
    [240, '', 'MATERIAL.  APPLY TO BOTH EXTERNAL LAYERS IN ACCORDANCE WITH IPC-SM-840C (TYPE B, CLASS 2).'],
    [248, '', 'USE APPROPRIATE SOLDER MASK ARTWORK FOR EACH SIDE OF BOARD'],
    [256, '5.', 'SOLDER MISREGISTRATION SHALL NOT EXCEED 0.004", SOLDER MASK OVERLAP IS NOT PERMITTED'],
    [264, '', 'ON SMD LANDS.'],
    [272, '6.', 'DRILL BOARDS USING DRILL PATTERNS AND HOLE SCHEDULE.  HOLE LOCATIONS MAY VARY WITHIN 0.003"'],
    [280, '', '(RADIAL ERROR) MAX. ABOUT TRUE POSITION, AS LONG AS MINIMUM ANNULAR RING IS NOT VIOLATED.'],
    [288, '7.', 'ALL HOLES ARE PLATED-THRU UNLESS NOTED OTHERWISE.  MINIMUM COPPER PLATING IN HOLES'],
    [296, '', 'TO BE 0.0007".'],
    [303, '8.', 'MINIMUM ANNULAR RING (EXTERNAL AND INTERNAL) IN ACCORDANCE WITH IPC-6012A, CLASS 2.'],
    [311, '9.', 'A CERTIFICATE OF COMPLIANCE WITH IPC-6012A, CLASS 2, SHALL BE SUBMITTED WITH EACH LOT.'],
    [319, '10.', 'ALL EXPOSED HOLES, LANDS, AND LINES TO BE ELECTROLESS, NICKEL/IMMERSION GOLD (ENIG)'],
    [327, '', 'PLATED UNLESS NOTED OTHERWISE.'],
    [335, '11.', 'MINIMUM FINISHED LINE WIDTH IS 0.008" WITH +/- 0.0016" TOLERANCE.'],
    [343, '12.', 'MINIMUM FINISHED CONDUCTOR SPACING IS 0.007" UNLESS NOTED OTHERWISE.'],
    [351, '13.', 'DIMENSIONS ARE AFTER ETCHING AND PLATING, AND ARE BASIC UNLESS OTHERWISE INDICATED.'],
    [359, '14.', 'SILKSCREEN PRIMARY SIDE (TOP) AND SECONDARY SIDE (BOTTOM) OF BOARD USING WHITE EPOXY BASE'],
    [367, '', 'INK PER IPC-6012A AND INSPECTED PER IPC-A-610C, CLASS 2.'],
    [374, '15.', '100% BARE BOARD ELECTRICAL TEST REQUIRED PER IPC-9252.'],
    [382, '16.', 'PCB FABRICATOR SHALL APPLY DATE CODE, ID, AND UL MARKING TO SECONDARY SIDE (BOTTOM) SILKSCREEN.'],
    [390, '17.', 'INSPECT PER IPC-600F, CLASS 2, EXCEPT AS SPECIFIED HERE WITHIN.'],
    [398, '18.', 'PCB REPAIRS OF DAMAGED TRACES NOT PERMISSIBLE.'],
    [406, '19.', 'THE FOLLOWING TOLERANCES APPLY UNLESS NOTED OTHERWISE.']
];

document.getElementById('notes').innerHTML =
    '<text x="1138" y="169">FABRICATION NOTES:  (ALL STANDARDS LISTED SHALL BE SUPERSEDED BY CURRENT REVISION)</text>' +
    notes.map(([y, num, text]) =>
        (num ? `<text x="1158" y="${y}" text-anchor="end">${num}</text>` : '') +
        `<text x="1163" y="${y}">${text}</text>`
    ).join('');

const drills = [
    [698, 409], [714, 409], [722, 409], [730, 409], [737, 409], [745, 409], [762, 409], [777, 409],
    [801, 409], [812, 409], [698, 423], [809, 427], [746, 432], [738, 434], [730, 435], [722, 435],
    [703, 442], [777, 441], [769, 447], [789, 454], [785, 462], [737, 466], [753, 468], [762, 468],
    [698, 488], [706, 488], [737, 488], [753, 488], [769, 488], [777, 488], [806, 488], [817, 488]
];

document.getElementById('drills').innerHTML = drills.map(([x, y]) =>
    `<path d="M${x - 2} ${y + 0.5}h5M${x + 0.5} ${y - 2}v5" stroke="#e07020"/>`
).join('');
```
